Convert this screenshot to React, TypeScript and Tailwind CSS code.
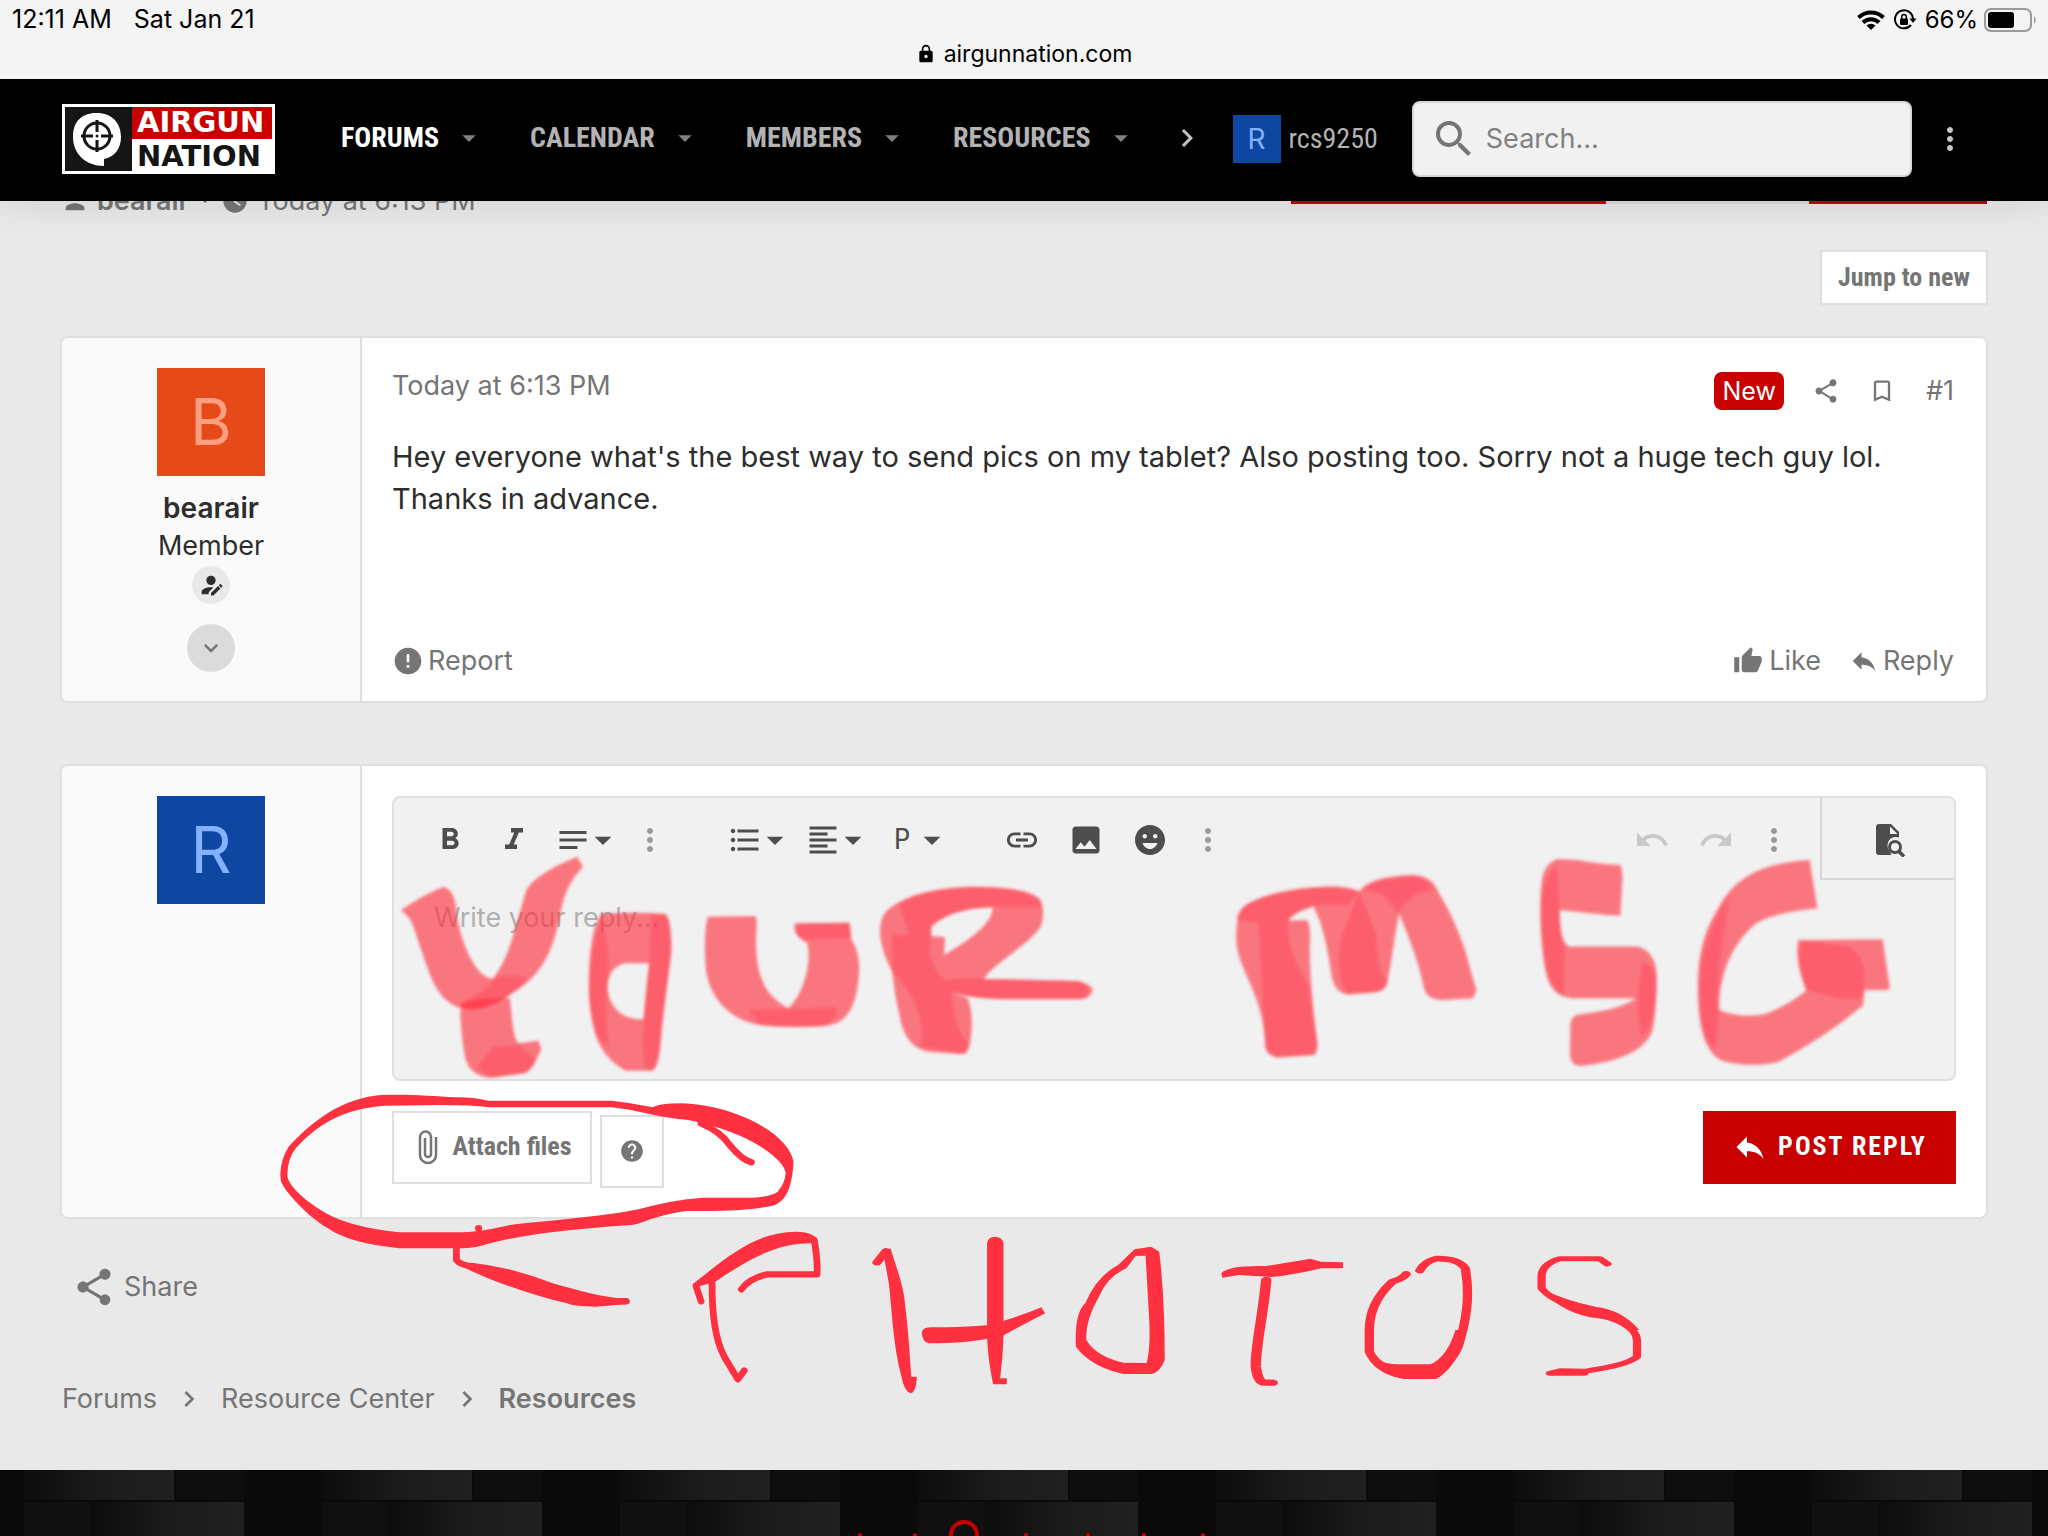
import React from "react";
import type { IconType } from "react-icons";
import {
  MdArrowDropDown,
  MdBookmarkBorder,
  MdChevronRight,
  MdEmojiEmotions,
  MdError,
  MdExpandMore,
  MdFormatAlignLeft,
  MdFormatBold,
  MdFormatItalic,
  MdFormatListBulleted,
  MdHelp,
  MdImage,
  MdInsertLink,
  MdLock,
  MdMoreVert,
  MdNotes,
  MdPerson,
  MdRedo,
  MdReply,
  MdSearch,
  MdShare,
  MdThumbUp,
  MdUndo,
  MdWatchLater,
} from "react-icons/md";

const condensed = "font-['Roboto_Condensed','Liberation_Sans_Narrow',Roboto,sans-serif]";

const navItems = [
  { label: "FORUMS", active: true },
  { label: "CALENDAR", active: false },
  { label: "MEMBERS", active: false },
  { label: "RESOURCES", active: false },
];

function StatusBar() {
  return (
    <div className="relative z-20 h-[79px] bg-[#f4f4f4] text-black">
      <div className="flex h-10 items-center justify-between pl-3 pr-2.5 text-[25px]">
        <div className="flex gap-[22px]">
          <span>12:11 AM</span>
          <span>Sat Jan 21</span>
        </div>
        <div className="flex items-center gap-2 text-[24px]">
          <svg viewBox="0 0 28 20" className="h-5 w-7" fill="none" stroke="black" strokeWidth="4">
            <path d="M1.5 7.5a18 18 0 0 1 25 0" />
            <path d="M6 12.5a11.500 11.500 0 0 1 16 0" />
            <path d="M14 20l-4.500-4.500a6.500 6.500 0 0 1 9 0z" fill="black" stroke="none" />
          </svg>
          <svg viewBox="0 0 24 22" className="h-[22px] w-6" fill="none" stroke="black" strokeWidth="2">
            <path d="M18 16a9 9 0 1 1 2-6" />
            <path d="M16.500 9.500h7l-3.500 4.500z" fill="black" stroke="none" />
            <rect x="7" y="9.500" width="8" height="6.500" rx="1" fill="black" stroke="none" />
            <path d="M8.700 10V7.800a2.300 2.300 0 0 1 4.600 0V10" strokeWidth="1.500" />
          </svg>
          <span>66%</span>
          <svg viewBox="0 0 54 24" className="-ml-0.5 h-6 w-[54px]">
            <rect x="1" y="1" width="46" height="22" rx="6" fill="none" stroke="#999" strokeWidth="2" />
            <rect x="4" y="4" width="26" height="16" rx="3" fill="black" />
            <path d="M50 8q3.500 4 0 8z" fill="#999" />
          </svg>
        </div>
      </div>
      <div className="flex items-center justify-center gap-2 text-[23px] leading-7">
        <MdLock className="size-5" />
        <span>airgunnation.com</span>
      </div>
    </div>
  );
}

function Logo() {
  return (
    <a href="#" aria-label="Airgun Nation" className="block">
      <svg viewBox="0 0 213 70" className="h-[70px] w-[213px]">
        <rect width="213" height="70" fill="white" />
        <rect x="3" y="3" width="67" height="64" fill="#151515" />
        <rect x="70" y="3" width="140" height="32" fill="#c90000" />
        <path d="M35 9c15 0 24 10 24 24 0 11-6 20-17 22v7c-18 0-31-12-31-29S21 9 35 9z" fill="white" />
        <g fill="none" stroke="#151515" strokeWidth="3">
          <circle cx="35" cy="32" r="13" />
          <path d="M35 16v12M35 36v12M19 32h12M39 32h12" />
        </g>
        <circle cx="35" cy="32" r="1.500" fill="#151515" />
        <text x="75" y="28" fontSize="29" fontWeight="700" fill="white" className="font-['DejaVu_Sans',sans-serif]">AIRGUN</text>
        <text x="75" y="62" fontSize="29" fontWeight="700" fill="#151515" className="font-['DejaVu_Sans',sans-serif]">NATION</text>
      </svg>
    </a>
  );
}

function Header() {
  return (
    <header className={`relative z-10 flex h-[122px] items-center bg-black pb-0.5 pl-[62px] pr-[80px] shadow-[0_0_40px_rgba(0,0,0,0.12)] ${condensed}`}>
      <Logo />
      <nav className="ml-[66px] flex items-center gap-[45px] pb-0.5">
        {navItems.map((item) => (
          <a
            key={item.label}
            href="#"
            className={`flex items-center gap-[14px] text-[28px] font-bold ${item.active ? "text-white" : "text-[#b3b3b3]"}`}
          >
            {item.label}
            <MdArrowDropDown className="size-8 text-[#808080]" />
          </a>
        ))}
      </nav>
      <button aria-label="More sections" className="ml-8 pb-0.5 text-[#c4c4c4]">
        <MdChevronRight className="size-9" />
      </button>
      <a href="#" className="ml-7 flex items-center gap-2 text-[28px] text-[#b3b3b3]">
        <span className="flex size-12 items-center justify-center bg-[#0d47a1] font-['Inter',sans-serif] text-[28px] text-[#82b1ff]">R</span>
        rcs9250
      </a>
      <label className="ml-[34px] flex h-[76px] min-w-0 flex-1 items-center gap-2 rounded-lg border-2 border-[#d6d6d6] bg-[#f1f1f1] px-4 font-['Inter',sans-serif]">
        <MdSearch className="size-12 shrink-0 text-[#757575]" />
        <input aria-label="Search" placeholder="Search…" className="w-full min-w-0 bg-transparent text-[27px] outline-none placeholder:text-[#808080]" />
      </label>
      <button aria-label="Menu" className="ml-5 text-[#c8c8c8]">
        <MdMoreVert className="size-9" />
      </button>
    </header>
  );
}

function Avatar({ letter, color }: { letter: string; color: string }) {
  return <div className={`flex size-[108px] items-center justify-center text-[64px] ${color}`}>{letter}</div>;
}

function Post() {
  return (
    <article className="flex min-h-[367px] rounded-lg border-2 border-[#dfdfdf] bg-white">
      <div className="flex w-[300px] shrink-0 flex-col items-center rounded-l-md border-r-2 border-[#dfdfdf] bg-[#fafafa] pt-[30px]">
        <Avatar letter="B" color="bg-[#e64a19] text-[#ff9e80]" />
        <a href="#" className="mt-3 text-[28px] font-semibold leading-10 text-[#2d2d2d]">bearair</a>
        <span className="text-[27px] leading-9 text-[#2d2d2d]">Member</span>
        <span className="mt-0.5 flex size-[38px] items-center justify-center rounded-full bg-[#e9e9e9]">
          <svg viewBox="0 0 24 24" className="size-7" fill="#2d2d2d">
            <path d="M21.700 13.350l-1 1-2.050-2.050 1-1c.21-.21.56-.21.77 0l1.280 1.280c.21.21.21.56 0 .77M12 18.940l6.060-6.060 2.050 2.050L14.060 21H12v-2.060M12 14c-4.420 0-8 1.790-8 4v2h6v-1.890l4-4c-.66-.08-1.330-.11-2-.11m0-10a4 4 0 0 0-4 4 4 4 0 0 0 4 4 4 4 0 0 0 4-4 4 4 0 0 0-4-4z" />
          </svg>
        </span>
        <button aria-label="Expand user details" className="mt-5 flex size-12 items-center justify-center rounded-full bg-[#dbdbdb] text-[#757575]">
          <MdExpandMore className="size-7" />
        </button>
      </div>
      <div className="flex flex-1 flex-col px-[30px] pb-5 pt-[30px]">
        <div className="flex h-9 items-start justify-between text-[27px] leading-9 text-[#757575]">
          <time>Today at 6:13 PM</time>
          <div className="mt-1 flex items-center gap-7 pr-0.5">
            <span className="rounded-lg bg-[#c80000] px-2 text-[25px] leading-[38px] text-white">New</span>
            <button aria-label="Share"><MdShare className="size-7" /></button>
            <button aria-label="Bookmark"><MdBookmarkBorder className="size-7" /></button>
            <a href="#" className="pl-0.5">#1</a>
          </div>
        </div>
        <p className="mt-8 text-[29px] leading-[42px] text-[#2d2d2d]">
          Hey everyone what's the best way to send pics on my tablet? Also posting too. Sorry not a huge tech guy lol.
          <br />
          Thanks in advance.
        </p>
        <div className="mt-auto flex items-center pr-0.5 text-[27px] leading-10 text-[#757575]">
          <button className="flex items-center gap-1"><MdError className="size-8" />Report</button>
          <button className="ml-auto flex items-center gap-1.5"><MdThumbUp className="size-[30px]" />Like</button>
          <button className="ml-7 flex items-center gap-1"><MdReply className="size-[30px]" />Reply</button>
        </div>
      </div>
    </article>
  );
}

function Tool({ icon: Icon, label, menu }: { icon: IconType; label: string; menu?: boolean }) {
  return (
    <button aria-label={label} className={`flex h-[82px] items-center justify-center pt-0.5 ${menu ? "w-[78px]" : "w-16"}`}>
      <Icon className="size-9 shrink-0" />
      {menu && <MdArrowDropDown className="-mx-2 size-10 shrink-0" />}
    </button>
  );
}

function MoreTool() {
  return (
    <button aria-label="More options" className="flex h-[82px] w-[52px] items-center justify-center pt-0.5 text-[#999]">
      <MdMoreVert className="size-9" />
    </button>
  );
}

function Editor() {
  return (
    <div className="overflow-hidden rounded-lg border-2 border-[#dfdfdf] bg-[#f1f1f1]">
      <div className="flex items-start text-[#4d4d4d]">
        <div className="flex pl-6">
          <Tool icon={MdFormatBold} label="Bold" />
          <Tool icon={MdFormatItalic} label="Italic" />
          <Tool icon={MdNotes} label="Text options" menu />
          <MoreTool />
        </div>
        <div className="ml-[42px] mr-0.5 flex">
          <Tool icon={MdFormatListBulleted} label="List" menu />
          <Tool icon={MdFormatAlignLeft} label="Alignment" menu />
          <button className={`flex h-[82px] w-[78px] items-center justify-end pt-0.5 text-[29px] ${condensed}`}>
            P<MdArrowDropDown className="ml-0.5 size-10" />
          </button>
        </div>
        <div className="ml-9 flex">
          <Tool icon={MdInsertLink} label="Insert link" />
          <Tool icon={MdImage} label="Insert image" />
          <Tool icon={MdEmojiEmotions} label="Smilies" />
          <MoreTool />
        </div>
        <div className="ml-auto mr-5 flex text-[#c8c8c8]">
          <Tool icon={MdUndo} label="Undo" />
          <Tool icon={MdRedo} label="Redo" />
          <MoreTool />
        </div>
        <button aria-label="Preview" className="flex h-[82px] w-[134px] items-center justify-center border-b-2 border-l-2 border-[#d6d6d6] pl-1 pt-1">
          <svg viewBox="0 0 32 34" className="h-[34px] w-8" fill="#4d4d4d">
            <path d="M5 1h12l8 8v5.500a8.500 8.500 0 0 0-9 14l1.500 3.500H5q-3 0-3-3V4q0-3 3-3z" />
            <path d="M16 3.500V11h7.500z" fill="#f1f1f1" />
            <circle cx="21" cy="24" r="5.500" fill="none" stroke="#4d4d4d" strokeWidth="3" />
            <path d="M24.500 28l5.500 5.500" stroke="#4d4d4d" strokeWidth="3.500" />
          </svg>
        </button>
      </div>
      <textarea
        aria-label="Reply"
        placeholder="Write your reply..."
        className="block h-[199px] w-full resize-none bg-transparent px-10 pt-5 text-[27px] leading-9 outline-none placeholder:text-[#b0b0b0]"
      />
    </div>
  );
}

function ReplyForm() {
  return (
    <form className="mt-[61px] flex min-h-[455px] rounded-lg border-2 border-[#dfdfdf] bg-white">
      <div className="flex w-[300px] shrink-0 justify-center rounded-l-md border-r-2 border-[#dfdfdf] bg-[#fafafa] pt-[30px]">
        <Avatar letter="R" color="bg-[#0d47a1] text-[#82b1ff]" />
      </div>
      <div className="flex-1 px-[30px] pt-[30px]">
        <Editor />
        <div className={`mt-[30px] flex items-start text-[26px] font-bold ${condensed}`}>
          <button type="button" className="flex h-[73px] w-[200px] items-center justify-center gap-2.5 border-2 border-[#dfdfdf] pb-0.5 pl-0.5 text-[#757575]">
            <svg viewBox="0 0 20 36" className="h-9 w-7" fill="none" stroke="#757575" strokeWidth="2.500">
              <path d="M18 8v18a8 8 0 0 1-16 0V8a5.500 5.500 0 0 1 11 0v17a3 3 0 0 1-6 0V9" />
            </svg>
            Attach files
          </button>
          <button type="button" aria-label="Help" className="ml-2 mt-1 flex h-[73px] w-16 items-center justify-center border-2 border-[#dfdfdf] pb-0.5 text-[#757575]">
            <MdHelp className="size-[26px]" />
          </button>
          <button className="ml-auto flex h-[73px] w-[253px] items-center justify-center gap-2.5 bg-[#c80000] pb-0.5 tracking-[2px] text-white">
            <MdReply className="size-9" />
            POST REPLY
          </button>
        </div>
      </div>
    </form>
  );
}

function Breadcrumbs() {
  return (
    <nav aria-label="Breadcrumb" className="mt-[70px] flex items-center gap-4 pl-0.5 text-[27px] leading-10 text-[#757575]">
      <a href="#">Forums</a>
      <MdChevronRight className="size-8" />
      <a href="#">Resource Center</a>
      <MdChevronRight className="size-8" />
      <a href="#" className="font-semibold">Resources</a>
    </nav>
  );
}

function Footer() {
  return (
    <footer className="min-h-[66px] flex-1 overflow-hidden bg-black">
      <svg viewBox="0 0 2048 66" className="block w-full">
        <defs>
          <linearGradient id="weave" x1="0" x2="1">
            <stop offset="0" stopColor="#0c0c0c" />
            <stop offset="0.500" stopColor="#1b1b1b" />
            <stop offset="1" stopColor="#202020" />
          </linearGradient>
          <pattern id="carbon" width="298" height="124" x="24" patternUnits="userSpaceOnUse">
            <rect width="298" height="124" fill="#0a0a0a" />
            <rect x="0" width="150" height="30" fill="url(#weave)" />
            <rect x="152" width="68" height="30" fill="#0d0d0d" />
            <rect x="0" y="32" width="66" height="40" fill="#101010" />
            <rect x="66" y="32" width="154" height="40" fill="url(#weave)" />
          </pattern>
        </defs>
        <rect width="2048" height="66" fill="url(#carbon)" />
        <circle cx="964" cy="65" r="13" fill="none" stroke="#c80000" strokeWidth="4" />
        <path d="M858 65h4M913 65h4M1024 65h4M1086 65h4M1142 65h4M1201 65h4" stroke="#c80000" strokeWidth="3" />
      </svg>
    </footer>
  );
}

// Freehand marks drawn over the page: a wide highlighter and a solid pen
function Annotations() {
  return (
    <svg viewBox="0 0 2048 1536" className="pointer-events-none absolute left-0 top-0 z-30 w-full" fill="#ff3040" aria-hidden="true">
      <defs>
        <filter id="soft"><feGaussianBlur stdDeviation="1.600" /></filter>
        <filter id="softer"><feGaussianBlur stdDeviation="4" /></filter>
      </defs>
      <g filter="url(#soft)">
        <g transform="translate(380 780) scale(0.472 0.3333)">
          <g fillOpacity="0.64">
            <path d="M45 390Q90 345 135 320Q160 330 162 400C170 480 200 590 238 597C275 540 290 420 310 330Q330 280 418 230L430 260Q395 310 385 380C370 500 350 580 280 640C230 690 200 690 185 688C130 680 110 610 90 520C75 460 70 430 62 415Z" />
            <path d="M172 670Q220 650 275 655C280 700 280 780 295 790L335 782L342 805Q325 870 305 880L235 893Q190 890 180 830C172 760 168 700 172 670Z" />
            <path fillRule="evenodd" d="M470 402Q540 395 605 402Q618 420 617 520C610 600 600 700 595 780Q590 870 575 872H520C470 830 450 780 443 650C440 500 455 420 470 402ZM570 550H520Q485 560 482 620C485 690 520 720 558 718Z" />
            <path d="M695 410L795 408Q800 420 797 460C795 560 805 640 865 685C900 640 915 540 905 490Q870 460 880 430L995 428L998 475Q1018 520 1015 580C1010 680 990 735 940 738Q860 745 805 735C740 720 695 650 690 560Q685 450 695 410Z" />
            <path d="M1085 575C1050 480 1055 420 1075 390Q1130 325 1250 320Q1380 320 1400 360Q1410 400 1400 440C1370 500 1290 560 1280 598L1480 603Q1510 615 1510 630Q1505 658 1480 658H1320Q1250 655 1215 640L1245 655Q1258 700 1252 770Q1250 825 1230 822L1160 815Q1110 800 1100 700C1090 640 1088 600 1085 575ZM1168 440V468L1197 472L1195 525Q1300 440 1298 382Q1210 385 1168 440Z" fillRule="evenodd" />
          </g>
          <g fillOpacity="0.34">
            <path d="M175 665Q230 630 240 597Q265 580 300 590Q330 590 265 655Q220 690 185 688Z" />
            <path d="M240 800L295 795L330 840Q325 870 305 880L235 893L205 860Z" />
            <path d="M575 402L605 402Q618 420 617 520C610 600 600 700 595 780Q590 870 575 872L560 860Q552 760 570 550Z" />
            <path d="M470 420Q443 500 443 650Q450 780 485 800Q475 700 482 620Q490 500 470 420Z" />
            <path d="M780 688Q860 690 965 682Q975 710 940 738Q860 745 805 735Z" />
            <path d="M890 430L995 428L998 475L895 478Q870 460 890 430Z" />
            <path d="M1100 370Q1160 322 1270 320Q1390 325 1402 382H1300Q1210 385 1168 440L1165 520Q1180 600 1205 600Q1220 590 1480 603Q1500 615 1500 630Q1500 658 1480 658H1320Q1250 655 1210 630Q1215 740 1245 790L1240 822L1145 800Q1160 680 1085 575L1085 465H1120Z" />
          </g>
        </g>
        <g transform="translate(1200 780) scale(0.5102 0.3333)">
          <g fillOpacity="0.64">
            <path d="M72 440Q72 390 95 370Q160 320 270 320Q300 325 312 335Q330 290 420 285Q455 290 465 330C500 420 520 500 530 570L542 630L535 655L470 660Q445 655 440 630C425 520 400 440 390 400C380 480 375 550 368 600Q365 635 340 637L290 643Q265 640 258 590C250 500 240 430 222 380Q180 400 172 422L210 420Q218 440 215 500C215 620 225 720 230 790Q230 825 220 825L150 832Q130 825 128 800C125 620 60 560 72 440Z" />
            <path d="M700 238L740 240Q780 252 825 255L828 290L824 407L800 405L705 390Q705 490 725 500H860Q895 520 895 590C895 680 890 740 885 760Q860 840 745 858Q725 855 725 820L726 730Q728 705 745 703Q820 690 855 655H730Q690 650 680 590C665 500 665 350 670 300Q675 250 700 238Z" />
            <path d="M1195 240L1210 385Q1130 395 1090 430C1040 490 1015 600 1017 690Q1060 715 1105 703Q1150 680 1188 632Q1165 540 1172 480L1338 478L1352 625L1345 630H1302L1300 675C1250 740 1190 800 1130 848Q1070 865 1020 840Q985 810 978 690C972 560 980 480 1010 400C1040 310 1080 250 1195 240Z" />
          </g>
          <g fillOpacity="0.34">
            <path d="M72 420Q72 390 95 370Q160 320 270 320Q300 325 312 335L290 375H222Q180 400 172 430Q170 520 215 620C220 720 225 740 230 790Q230 825 220 825L150 832Q130 825 128 800Q118 560 115 430Z" />
            <path d="M312 335L345 460Q350 600 368 600Q365 635 340 637L290 643Q265 600 275 480Z" />
            <path d="M700 260L705 390Q705 490 715 500L712 645Q680 620 675 520C665 400 665 290 700 260Z" />
            <path d="M868 545Q895 560 895 620Q890 740 865 770Q850 660 868 545Z" />
            <path d="M1180 480L1270 500Q1300 520 1302 580L1300 650Q1280 670 1190 630Q1165 560 1180 480Z" />
          </g>
          <g fillOpacity="0.34" filter="url(#softer)">
            <path d="M320 330Q340 290 420 287Q450 300 455 330Q405 340 390 400L358 342Z" />
            <path d="M1040 340Q1010 560 1017 690L1010 810Q985 790 980 690C975 560 985 480 1040 340Z" />
          </g>
        </g>
      </g>
      <g transform="translate(260 1080) scale(0.3571 0.3333)">
        <path fillRule="evenodd" d="M340 45C420 42 480 48 550 52Q600 52 640 62H985Q1040 68 1100 82Q1120 70 1180 70C1330 75 1480 160 1494 245C1490 330 1470 375 1420 380Q1350 395 1200 393C1120 400 1060 435 1040 435C900 445 740 460 620 497Q590 505 550 505H390Q250 490 190 445C120 400 60 320 58 300Q52 250 80 200C150 120 230 55 340 45ZM350 77L500 75Q600 75 640 82H985C1060 90 1120 115 1200 120Q1240 130 1265 137C1380 170 1470 240 1472 280Q1470 310 1450 335Q1430 350 1380 353H1240Q1150 360 1060 388C960 410 780 425 700 435C640 450 600 457 550 457H390Q240 440 170 390C110 350 80 310 77 290Q75 240 100 205C180 110 260 85 350 77Z" />
        <circle cx="612" cy="445" r="10" />
        <path d="M592 548Q700 560 820 610C900 635 960 650 1000 654H1030V672L940 680Q880 680 860 670C760 645 640 600 570 562Z" />
        <path d="M1212 612C1310 530 1390 455 1500 455Q1560 455 1562 490H1545C1450 490 1380 530 1275 605L1225 620Z" />
        <g fill="none" stroke="#ff3040" strokeWidth="19" strokeLinecap="round" strokeLinejoin="round">
          <path d="M1235 130Q1290 155 1315 195Q1350 240 1376 247" />
          <path d="M550 500V540Q560 555 600 560M990 664H1026" />
          <path d="M1235 664L1221 618M1552 480Q1562 540 1560 583H1420Q1370 595 1348 628" />
          <path d="M1266 605C1265 720 1280 790 1300 830L1338 898L1356 872" />
        </g>
      </g>
      <g transform="translate(800 1180) scale(0.5485 0.3333)">
        <path d="M165 205C175 260 190 320 192 380C198 460 200 520 203 590L213 590Q212 635 202 640Q190 635 185 590C170 500 168 400 162 310L152 220Z" />
        <path d="M341 190Q342 170 356 170Q370 172 371 190V470Q370 530 365 595L377 595V613L352 613Q342 530 341 470Z" />
        <path d="M222 455Q225 442 240 442Q300 442 345 435Q400 410 440 382L447 400Q400 440 372 465Q320 490 235 490Q222 485 222 455Z" />
        <path fillRule="evenodd" d="M640 200L655 215Q665 350 665 540Q655 580 640 582H590Q530 560 503 500Q500 400 520 370Q540 290 580 255L610 208ZM630 227L612 228L595 265Q560 290 545 350Q520 420 522 480Q540 530 590 548L632 549Q640 500 636 400Z" />
        <path d="M768 280Q780 255 850 258Q900 245 930 236L950 245L990 247V265L950 265Q900 285 860 291L800 285L770 293Z" />
        <path d="M1030 515Q1050 550 1090 553H1150Q1180 530 1195 450L1215 450Q1200 560 1160 597H1100Q1045 580 1030 515Z" />
        <path d="M1352 325Q1390 360 1450 380Q1500 390 1530 450L1510 450Q1490 420 1440 412Q1380 390 1352 325Z" />
        <g fill="none" stroke="#ff3040" strokeWidth="17" strokeLinecap="round" strokeLinejoin="round">
          <path d="M140 248L157 213" />
          <path d="M850 300C845 400 830 500 831 560Q835 610 848 608H862" strokeWidth="19" />
          <path d="M1105 282Q1100 295 1080 305C1050 350 1038 400 1038 450V515Q1050 560 1095 575H1150Q1185 560 1200 500C1215 420 1222 350 1213 265Q1200 235 1160 236Q1138 245 1130 272" />
          <path d="M1472 252L1458 236H1385Q1355 250 1352 285V325Q1375 370 1440 395Q1525 430 1526 480V530Q1510 555 1430 574L1388 572L1367 580H1430" strokeWidth="15" />
        </g>
      </g>
    </svg>
  );
}

export default function App() {
  return (
    <div className="relative flex min-h-screen flex-col overflow-hidden bg-[#e9e9e9] font-['Inter',sans-serif]">
      <StatusBar />
      <Header />
      {/* Thread title row, scrolled under the header */}
      <div className="-mt-10 flex h-[58px] items-start justify-between px-[61px] text-[27px] text-[#757575]">
        <div className="flex items-center gap-2 pt-[22px] leading-9">
          <MdPerson className="size-7" />
          <b className="font-semibold">bearair</b>
          <span className="px-1">·</span>
          <MdWatchLater className="size-7" />
          <span>Today at 6:13 PM</span>
        </div>
        <div className="flex h-[43px]">
          <div className="w-[315px] bg-[#c80000]" />
          <div className="w-[203px] bg-[#dcdcdc]" />
          <div className="w-[178px] bg-[#c80000]" />
        </div>
      </div>
      <main className="px-[60px] pb-[51px]">
        <div className="flex justify-end pb-[31px] pt-[31px]">
          <a href="#" className={`border-2 border-[#dfdfdf] bg-white px-4 text-[26px] font-bold leading-[51px] text-[#757575] ${condensed}`}>
            Jump to new
          </a>
        </div>
        <Post />
        <ReplyForm />
        <button className="mt-[46px] ml-3 flex items-center gap-2 text-[27px] leading-10 text-[#757575]">
          <MdShare className="size-11" />
          Share
        </button>
        <Breadcrumbs />
      </main>
      <Footer />
      <Annotations />
    </div>
  );
}
